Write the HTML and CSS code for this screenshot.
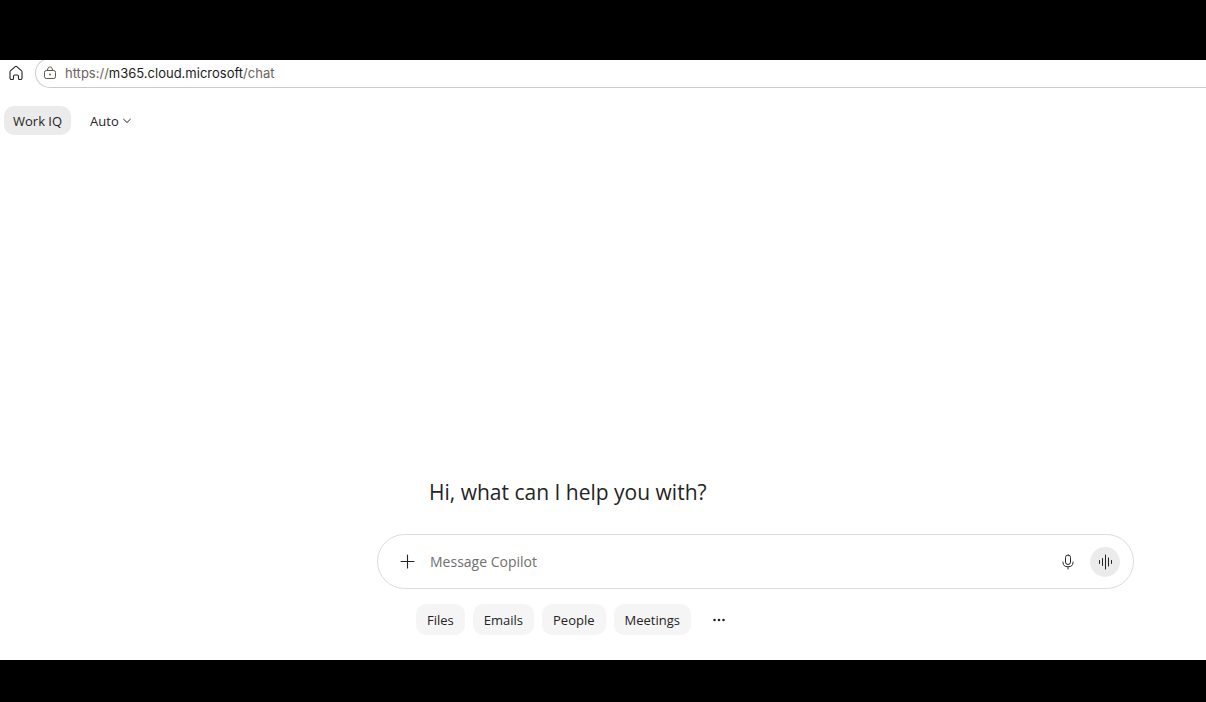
FILE: index.html
```html
<!DOCTYPE html>
<html lang="en">
<head>
<meta charset="utf-8">
<meta name="viewport" content="width=device-width, initial-scale=1">
<title>Copilot Chat</title>
<link rel="stylesheet" href="styles.css">
</head>
<body>
<div class="band band-top"></div>
<header class="browser-bar">
  <button class="home" type="button" aria-label="Home">
    <svg width="16" height="16" viewBox="0 0 16 16" fill="none" stroke="currentColor" stroke-width="1.1" stroke-linejoin="round"><path d="M2 6.900c0-.5.2-1 .6-1.300L7.200 1.600a1.200 1.200 0 0 1 1.600 0l4.600 4c.4.3.6.8.6 1.300V13.300a1.200 1.200 0 0 1-1.200 1.200h-1.300a1 1 0 0 1-1-1V11.200a1.200 1.200 0 0 0-1.200-1.200H6.700a1.200 1.200 0 0 0-1.200 1.200v2.300a1 1 0 0 1-1 1H3.200A1.200 1.200 0 0 1 2 13.300z"/></svg>
  </button>
  <div class="address">
    <svg class="lock" width="14" height="14" viewBox="0 0 14 14" fill="none" stroke="currentColor"><rect x="1.500" y="4.500" width="11" height="8" rx="1.800"/><path d="M4.200 4.500 5.200 2a1.500 1.500 0 0 1 1.400-1h.8a1.500 1.500 0 0 1 1.400 1l1 2.500"/><circle cx="7" cy="8.500" r=".9" fill="currentColor" stroke="none"/></svg>
    <a class="url" href="#">https://<span class="host">m365.cloud.microsoft</span>/chat</a>
  </div>
</header>
<main class="page">
  <nav class="toolbar">
    <button class="pill" type="button">Work IQ</button>
    <button class="mode" type="button">Auto
      <svg width="8" height="6" viewBox="0 0 8 6" fill="none" stroke="currentColor" stroke-linecap="round" stroke-linejoin="round"><path d="M.6 1.200 4 4.500l3.400-3.300"/></svg>
    </button>
  </nav>
  <section class="chat">
    <h1 class="greeting">Hi, what can I help you with?</h1>
    <form class="composer">
      <button class="icon-button" type="button" aria-label="Add">
        <svg width="15" height="15" viewBox="0 0 15 15" fill="none" stroke="currentColor" stroke-width="1.100" stroke-linecap="round"><path d="M7.500 1v13M1 7.500h13"/></svg>
      </button>
      <input class="message" type="text" placeholder="Message Copilot" aria-label="Message Copilot">
      <button class="icon-button" type="button" aria-label="Dictate">
        <svg width="12" height="16" viewBox="0 0 12 16" fill="none" stroke="currentColor" stroke-linecap="round"><rect x="3.500" y="1" width="5" height="9.500" rx="2.500"/><path d="M1 8v.5a4.500 4.500 0 0 0 4.500 4.200h1A4.500 4.500 0 0 0 11 8.500V8M6 12.800V15"/></svg>
      </button>
      <button class="icon-button voice" type="button" aria-label="Start voice chat">
        <svg width="14" height="16" viewBox="0 0 14 16" fill="none" stroke="currentColor" stroke-linecap="round"><path d="M1.500 6.500v3M4.500 4.500v7M7.500 1v14M10.500 4v8M13.500 6.500v3"/></svg>
      </button>
    </form>
    <div class="chips">
      <button class="chip" type="button">Files</button>
      <button class="chip" type="button">Emails</button>
      <button class="chip" type="button">People</button>
      <button class="chip" type="button">Meetings</button>
      <button class="more" type="button" aria-label="More">
        <svg width="12" height="4" viewBox="0 0 12 4" fill="currentColor"><circle cx="1.500" cy="2" r="1.300"/><circle cx="6" cy="2" r="1.300"/><circle cx="10.500" cy="2" r="1.300"/></svg>
      </button>
    </div>
  </section>
</main>
<div class="band band-bottom"></div>
</body>
</html>
```
FILE: styles.css
```css
* { box-sizing: border-box; }
body {
  margin: 0;
  min-height: 100vh;
  display: flex;
  flex-direction: column;
  background: #fff;
  color: #242424;
  font-family: "Open Sans", "Noto Sans", sans-serif;
  font-size: 13px;
}
button {
  display: flex;
  align-items: center;
  justify-content: center;
  padding: 0;
  border: 0;
  background: none;
  color: inherit;
  font: inherit;
  cursor: pointer;
}
.band { background: #000; }
.band-top { height: 60px; }
.band-bottom { height: 42px; }
.browser-bar {
  display: flex;
  height: 28px;
  padding-left: 8px;
  gap: 11px;
  overflow: hidden;
}
.home {
  width: 16px;
  height: 26px;
}
.address {
  flex: 1;
  display: flex;
  align-items: center;
  align-self: flex-end;
  height: 30px;
  padding-left: 7px;
  gap: 8px;
  border: 1px solid #cacaca;
  border-right: 0;
  border-radius: 15px 0 0 15px;
}
.lock { color: #5f5652; }
.url {
  color: #6b625e;
  font-family: Inter, sans-serif;
  font-size: 13px;
  text-decoration: none;
}
.host { color: #1b1b1b; }
.page {
  flex: 1;
  display: flex;
  flex-direction: column;
  justify-content: space-between;
}
.toolbar {
  display: flex;
  gap: 19px;
  padding: 18px 4px;
}
.pill {
  height: 29px;
  padding: 0 9px;
  border-radius: 10px;
  background: #ebebeb;
}
.mode { gap: 4px; }
.chat {
  width: calc(100% - 305px);
  max-width: 757px;
  margin-left: calc((100% + 305px - 757px) / 2);
  padding-bottom: 25px;
}
.greeting {
  margin: 0 0 26px;
  padding-left: 52px;
  font-size: 21px;
  font-weight: 400;
  line-height: 32px;
}
.composer {
  display: flex;
  align-items: center;
  height: 55px;
  padding: 0 13px 0 14px;
  border: 1px solid #dcdcdc;
  border-radius: 28px;
}
.icon-button {
  width: 30px;
  height: 30px;
  border-radius: 50%;
}
.message {
  flex: 1;
  min-width: 0;
  padding: 0 8px;
  border: 0;
  outline: 0;
  background: none;
  color: inherit;
  font: inherit;
  font-size: 14px;
}
.message::placeholder { color: #707070; opacity: 1; }
.voice {
  margin-left: 7px;
  background: #ebebeb;
}
.chips {
  display: flex;
  gap: 8px;
  padding: 15px 0 0 39px;
}
.chip {
  height: 31px;
  padding: 0 11px;
  border-radius: 10px;
  background: #f5f5f5;
}
.more { width: 40px; height: 31px; }
```
